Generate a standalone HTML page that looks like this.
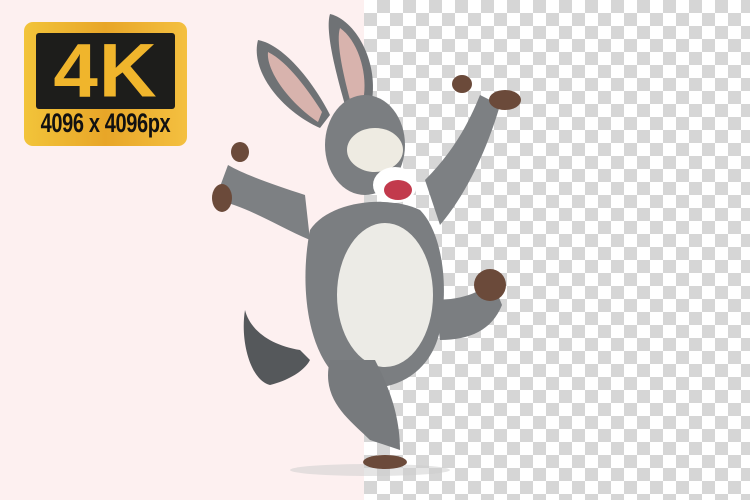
<!DOCTYPE html>
<html><head><style>
body{margin:0;width:750px;height:500px;overflow:hidden;position:relative;background:#fdf0f0;font-family:"Liberation Sans",sans-serif}
#chk{position:absolute;left:364px;top:0;width:386px;height:500px;
background-color:#fff;
background-image:linear-gradient(45deg,#d6d6d6 25%,transparent 25%,transparent 75%,#d6d6d6 75%),linear-gradient(45deg,#d6d6d6 25%,transparent 25%,transparent 75%,#d6d6d6 75%);
background-size:26px 26px;background-position:0 0,13px 13px}
#badge{position:absolute;left:24px;top:22px;width:163px;height:124px;border-radius:9px;background:linear-gradient(90deg,#f2c43a,#e8a628 50%,#f4c040)}
#inner{position:absolute;left:12px;top:11px;width:139px;height:76px;background:#1d1d1b;border-radius:3px;color:#f0b52c;font-weight:bold;font-size:80px;text-align:center;line-height:76px;letter-spacing:1px}
#inner span{display:inline-block;transform:scaleY(.95)}
#res{position:absolute;left:-20px;top:86px;width:203px;text-align:center;font-weight:bold;font-size:27px;color:#111;transform:scaleX(.74);letter-spacing:-0.5px}
</style></head><body>
<div id="chk"></div>
<div id="badge"><div id="inner"><span>4K</span></div><div id="res">4096 x 4096px</div></div>
<svg width="750" height="500" style="position:absolute;left:0;top:0">
<ellipse cx="370" cy="470" rx="80" ry="6" fill="#ccc" opacity=".5"/>
<path d="M320 128 C280 110 250 70 258 40 C285 45 315 85 330 115Z" fill="#6f7275"/>
<path d="M318 122 C288 102 266 70 268 52 C288 62 308 90 322 112Z" fill="#d8b3ad"/>
<path d="M345 105 C335 70 325 30 330 14 C355 20 378 60 372 100Z" fill="#6f7275"/>
<path d="M350 100 C342 70 336 40 340 28 C357 40 367 70 364 95Z" fill="#d8b3ad"/>
<path d="M305 195 C275 185 245 175 228 165 L215 200 C245 205 275 225 310 240Z" fill="#7d8083"/>
<path d="M425 180 C455 150 470 120 480 95 L500 105 C490 140 470 190 440 225Z" fill="#7d8083"/>
<ellipse cx="222" cy="198" rx="10" ry="14" fill="#6b4a3a"/>
<ellipse cx="240" cy="152" rx="9" ry="10" fill="#6b4a3a"/>
<ellipse cx="462" cy="84" rx="10" ry="9" fill="#6b4a3a"/>
<ellipse cx="505" cy="100" rx="16" ry="10" fill="#6b4a3a"/>
<path d="M310 230 C300 280 305 350 340 380 C380 400 430 380 440 330 C450 280 440 230 420 210 C390 195 330 200 310 230Z" fill="#7b7e81"/>
<ellipse cx="385" cy="295" rx="48" ry="72" fill="#ecebe6"/>
<path d="M330 360 C320 400 350 420 370 440 L400 450 C400 410 385 380 375 360Z" fill="#777a7d"/>
<path d="M435 300 C465 300 485 290 492 280 L502 305 C492 330 470 340 440 340Z" fill="#7b7e81"/>
<ellipse cx="490" cy="285" rx="16" ry="16" fill="#6b4a3a"/>
<ellipse cx="385" cy="462" rx="22" ry="7" fill="#6b4a3a"/>
<path d="M300 350 C270 345 250 330 245 310 C240 340 250 380 270 385 C290 380 305 370 310 360Z" fill="#55585b"/>
<ellipse cx="365" cy="145" rx="40" ry="50" fill="#7b7e81"/>
<ellipse cx="375" cy="150" rx="28" ry="22" fill="#eeebe2"/>
<ellipse cx="395" cy="185" rx="22" ry="18" fill="#fff"/>
<ellipse cx="398" cy="190" rx="14" ry="10" fill="#c23a4c"/>
</svg>
</body></html>
